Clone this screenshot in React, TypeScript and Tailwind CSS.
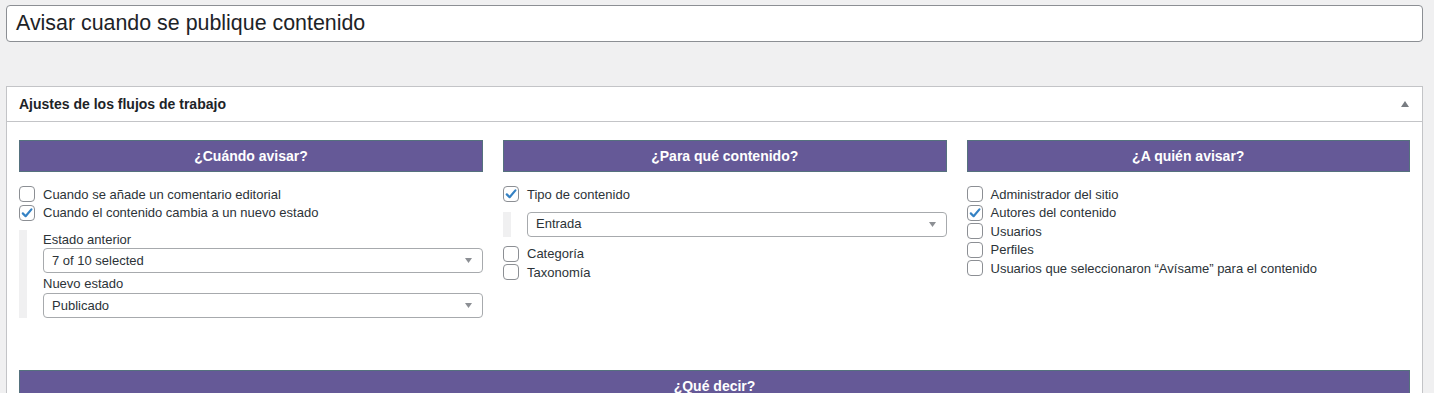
import { type ReactNode } from 'react';

const font = { fontFamily: '"Liberation Sans", Arial, sans-serif' };

function Check({ checked, label }: { checked?: boolean; label: string }) {
  return (
    <div className="h-[18.5px] flex items-center">
      <span className="w-4 h-4 rounded-[4px] border border-[#8c8f94] bg-white mr-2 flex items-center justify-center shrink-0">
        {checked && (
          <svg width="14" height="14" viewBox="0 0 14 14">
            <path d="M2.8 7.4 L5.6 10.2 L11.4 3.4" fill="none" stroke="#3582c4" strokeWidth="2.2" strokeLinecap="round" strokeLinejoin="round" />
          </svg>
        )}
      </span>
      <span className="text-[13px] text-[#2c3338] whitespace-nowrap">{label}</span>
    </div>
  );
}

function Select({ value }: { value: string }) {
  return (
    <div className="h-[25px] border border-[#a7aaad] rounded-[4px] bg-white flex items-center justify-between pl-[8px] pr-[10px]">
      <span className="text-[13px] text-[#2c3338]">{value}</span>
      <svg width="7" height="5" viewBox="0 0 7 5">
        <path d="M0 0 L7 0 L3.5 5 Z" fill="#8c8f94" />
      </svg>
    </div>
  );
}

function Heading({ children }: { children: ReactNode }) {
  return (
    <div className="h-8 bg-[#655997] border border-[#55717e] flex items-center justify-center text-white font-bold text-[14px]">
      {children}
    </div>
  );
}

function Indent({ children }: { children: ReactNode }) {
  return (
    <div className="flex my-2">
      <div className="w-2 bg-[#f0f0f1] mr-4 shrink-0" />
      <div className="flex-1">{children}</div>
    </div>
  );
}

export default function App() {
  return (
    <div className="min-h-screen bg-[#f0f0f1] pt-[5px] overflow-hidden" style={font}>
      <div className="ml-[6px] w-[1417px]">
        {/* Title */}
        <div className="h-[37px] bg-white border border-[#8c8f94] rounded-[4px] flex items-center px-[9px] text-[21.4px] text-[#1d2327]">
          Avisar cuando se publique contenido
        </div>

        {/* Workflow settings box */}
        <div className="mt-[44px] bg-white border border-[#c3c4c7]">
          <div className="h-[35px] border-b border-[#c3c4c7] flex items-center justify-between pl-3 pr-[13px]">
            <span className="text-[14px] font-bold text-[#1d2327]">Ajustes de los flujos de trabajo</span>
            <svg width="8" height="6" viewBox="0 0 8 6">
              <path d="M0 6 L4 0 L8 6 Z" fill="#787c82" />
            </svg>
          </div>

          <div className="px-3 pt-[18px] pb-8">
            <div className="grid grid-cols-[464px_1fr_1fr] gap-5">
              <div>
                <Heading>¿Cuándo avisar?</Heading>
                <div className="mt-[13px]">
                  <Check label="Cuando se añade un comentario editorial" />
                  <Check checked label="Cuando el contenido cambia a un nuevo estado" />
                  <Indent>
                    <div className="text-[13px] text-[#2c3338] h-[17px] leading-[17px] mt-[1px]">Estado anterior</div>
                    <Select value="7 of 10 selected" />
                    <div className="text-[13px] text-[#2c3338] h-[19px] leading-[19px] mt-[1px]">Nuevo estado</div>
                    <Select value="Publicado" />
                  </Indent>
                </div>
              </div>

              <div>
                <Heading>¿Para qué contenido?</Heading>
                <div className="mt-[13px]">
                  <Check checked label="Tipo de contenido" />
                  <Indent>
                    <Select value="Entrada" />
                  </Indent>
                  <Check label="Categoría" />
                  <Check label="Taxonomía" />
                </div>
              </div>

              <div>
                <Heading>¿A quién avisar?</Heading>
                <div className="mt-[13px]">
                  <Check label="Administrador del sitio" />
                  <Check checked label="Autores del contenido" />
                  <Check label="Usuarios" />
                  <Check label="Perfiles" />
                  <Check label="Usuarios que seleccionaron “Avísame” para el contenido" />
                </div>
              </div>
            </div>

            <div className="mt-[44px]">
              <Heading>¿Qué decir?</Heading>
            </div>
          </div>
        </div>
      </div>
    </div>
  );
}
